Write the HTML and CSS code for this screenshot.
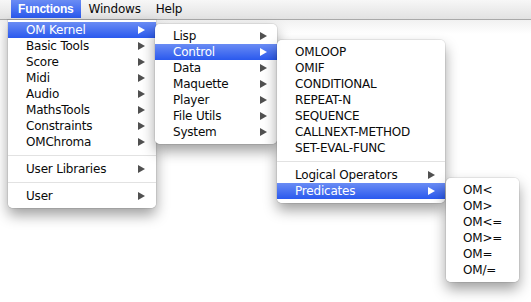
FILE: index.html
```html
<!DOCTYPE html>
<html lang="en">
  <head>
    <meta charset="UTF-8">
    <meta name="viewport" content="width=device-width, initial-scale=1.0">
    <title>OM - Functions menu</title>
    <link rel="stylesheet" href="styles.css">
  </head>
  <body>
    <!-- barra de menus -->
    <div id="menubar">
      <span class="title active">Functions</span>
      <span class="title">Windows</span>
      <span class="title">Help</span>
    </div>

    <div id="desktop">
      <div class="menu" id="menu-functions">
        <div class="item active">OM Kernel<i class="arrow"></i></div>
        <div class="item">Basic Tools<i class="arrow"></i></div>
        <div class="item">Score<i class="arrow"></i></div>
        <div class="item">Midi<i class="arrow"></i></div>
        <div class="item">Audio<i class="arrow"></i></div>
        <div class="item">MathsTools<i class="arrow"></i></div>
        <div class="item">Constraints<i class="arrow"></i></div>
        <div class="item">OMChroma<i class="arrow"></i></div>
        <div class="sep"></div>
        <div class="item">User Libraries<i class="arrow"></i></div>
        <div class="sep"></div>
        <div class="item">User<i class="arrow"></i></div>
      </div>

      <div class="menu sub" id="menu-kernel">
        <div class="item">Lisp<i class="arrow"></i></div>
        <div class="item active">Control<i class="arrow"></i></div>
        <div class="item">Data<i class="arrow"></i></div>
        <div class="item">Maquette<i class="arrow"></i></div>
        <div class="item">Player<i class="arrow"></i></div>
        <div class="item">File Utils<i class="arrow"></i></div>
        <div class="item">System<i class="arrow"></i></div>
      </div>

      <div class="menu sub" id="menu-control">
        <div class="item">OMLOOP</div>
        <div class="item">OMIF</div>
        <div class="item">CONDITIONAL</div>
        <div class="item">REPEAT-N</div>
        <div class="item">SEQUENCE</div>
        <div class="item">CALLNEXT-METHOD</div>
        <div class="item">SET-EVAL-FUNC</div>
        <div class="sep"></div>
        <div class="item">Logical Operators<i class="arrow"></i></div>
        <div class="item active">Predicates<i class="arrow"></i></div>
      </div>

      <div class="menu sub" id="menu-predicates">
        <div class="item">OM&lt;</div>
        <div class="item">OM&gt;</div>
        <div class="item">OM&lt;=</div>
        <div class="item">OM&gt;=</div>
        <div class="item">OM=</div>
        <div class="item">OM/=</div>
      </div>
    </div>
  </body>
</html>
```

FILE: styles.css
```css
body {
    font-family: 'DejaVu Sans', 'Noto Sans', sans-serif;
    font-size: 12px;
    letter-spacing: -0.2px;
    color: #0a0a0a;
    background-color: #ffffff;
    margin: 0;
    width: 531px;
    height: 302px;
    overflow: hidden;
}
#menubar { display: flex; align-items: stretch; height: 19px; padding-left: 11px; background: linear-gradient(#f7f7f7, #e2e2e2); border-bottom: 1px solid #a9a9a9; }
#menubar .title { padding: 0 7px; line-height: 18px; height: 18px; }
#menubar .title + .title { margin-left: 1px; }
#menubar .title.active { font-family: 'Liberation Sans', sans-serif; font-weight: bold; color: #fff; background: linear-gradient(#6a8cf4, #2a59ee); }
#desktop { position: relative; height: 282px; background: linear-gradient(#f1f1f1, #ffffff 14px); }
.menu { position: absolute; background-color: rgba(255, 255, 255, 0.97); box-shadow: 0 0 0 1px rgba(0, 0, 0, 0.07), 0 7px 14px rgba(0, 0, 0, 0.38); border-radius: 0 0 5px 5px; padding: 2px 0 4px; }
.menu.sub { border-radius: 5px; padding: 4px 0; }
#menu-functions { left: 8px; top: 0; width: 148px; z-index: 1; }
#menu-kernel { left: 155px; top: 4px; width: 122px; z-index: 2; }
#menu-control { left: 277px; top: 20px; width: 168px; z-index: 3; }
#menu-predicates { left: 446px; top: 158px; width: 73px; z-index: 4; }
.item { display: flex; justify-content: space-between; align-items: center; height: 16px; line-height: 16px; padding: 0 11px 0 18px; white-space: nowrap; }
#menu-kernel .item, #menu-control .item { padding-right: 10px; }
#menu-predicates .item { padding-left: 17px; }
.item.active { color: #fff; background: linear-gradient(#6a8cf4, #2a59ee); }
.arrow { display: block; width: 0; height: 0; border-left: 7px solid #505050; border-top: 4px solid transparent; border-bottom: 4px solid transparent; }
.item.active .arrow { border-left-color: #fff; }
.sep { height: 1px; background-color: #e2e2e2; margin: 5px 0; }
```
